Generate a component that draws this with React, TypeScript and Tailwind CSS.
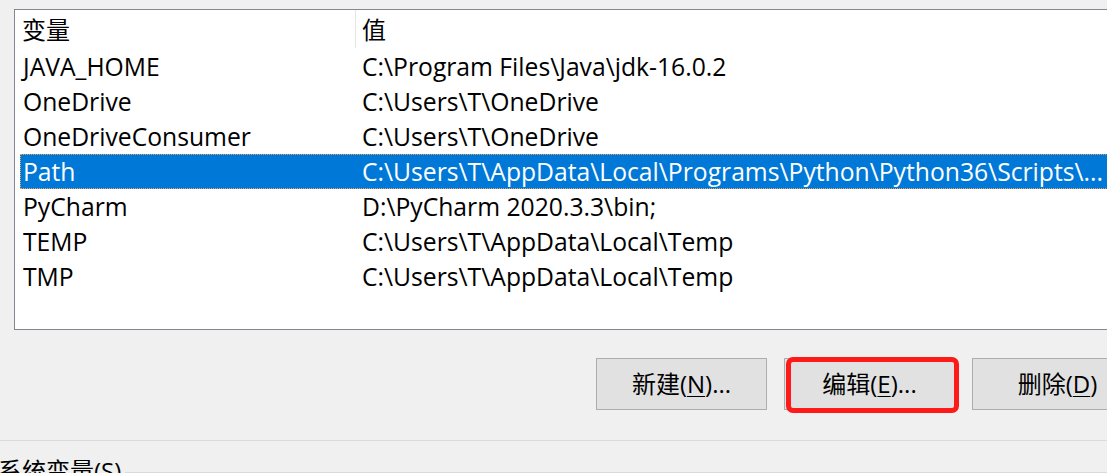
import React from "react";

const FONT = { fontFamily: '"Open Sans", "Noto Sans CJK SC", sans-serif' };

const rows = [
  { name: "JAVA_HOME", value: "C:\\Program Files\\Java\\jdk-16.0.2" },
  { name: "OneDrive", value: "C:\\Users\\T\\OneDrive" },
  { name: "OneDriveConsumer", value: "C:\\Users\\T\\OneDrive" },
  {
    name: "Path",
    value: "C:\\Users\\T\\AppData\\Local\\Programs\\Python\\Python36\\Scripts\\...",
    selected: true,
  },
  { name: "PyCharm", value: "D:\\PyCharm 2020.3.3\\bin;" },
  { name: "TEMP", value: "C:\\Users\\T\\AppData\\Local\\Temp" },
  { name: "TMP", value: "C:\\Users\\T\\AppData\\Local\\Temp" },
];

function Btn({ label, mn, tail, boxed }: { label: string; mn: string; tail: string; boxed?: boolean }) {
  return (
    <div className="relative shrink-0">
      <div className="w-[171px] h-[52px] border border-[#adadad] bg-[#e1e1e1] flex items-center justify-center text-[24px] text-black">
        <span>
          {label}(<span className="underline underline-offset-[3px] decoration-1">{mn}</span>){tail}
        </span>
      </div>
      {boxed && (
        <div className="absolute left-[2px] top-[-1px] w-[173px] h-[56px] border-[5px] border-[#ff1a1a] rounded-[7px]" />
      )}
    </div>
  );
}

export default function App() {
  return (
    <div className="w-[1107px] h-[473px] overflow-hidden bg-[#f0f0f0] text-black" style={FONT}>
      <div className="pt-[9px] pl-[14px]">
        <div className="w-[1120px] h-[321px] bg-white border-l border-t border-b border-[#828790]">
          {/* header */}
          <div className="flex h-[39px] items-center text-[24px]">
            <div className="w-[340px] pl-[7px]">变量</div>
            <div className="w-px h-[38px] bg-[#e5e5e5] self-start" />
            <div className="pl-[6px]">值</div>
          </div>
          {rows.map((r) => (
            <div
              key={r.name}
              className={
                "ml-[5px] h-[35px] flex items-center text-[24.7px] whitespace-nowrap " +
                (r.selected ? "bg-[#0078d7] text-white border border-dotted border-[#e9a15a]" : "")
              }
            >
              <div className={r.selected ? "w-[341px] pl-[2px]" : "w-[342px] pl-[3px]"}>{r.name}</div>
              <div>{r.value}</div>
            </div>
          ))}
        </div>
      </div>

      <div className="flex gap-[17px] pl-[596px] mt-[28px]">
        <Btn label="新建" mn="N" tail="..." />
        <Btn label="编辑" mn="E" tail="..." boxed />
        <Btn label="删除" mn="D" tail="" />
      </div>

      <div className="mt-[30px] border-t border-[#dadada]" />

      <div className="flex items-start mt-[18px] -ml-[2px]">
        <div className="text-[24px] leading-none">系统变量(S)</div>
        <div className="flex-1 ml-[4px] mt-[13px] border-t border-[#dadada]" />
      </div>
    </div>
  );
}
